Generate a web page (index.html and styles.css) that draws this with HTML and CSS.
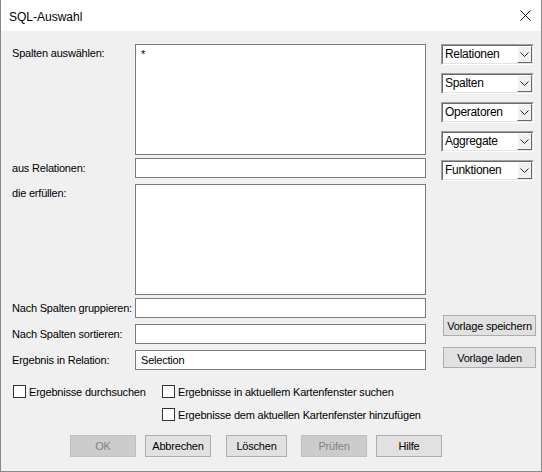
FILE: index.html
```html
<!DOCTYPE html>
<html lang="de">
<head>
<meta charset="utf-8">
<title>SQL-Auswahl</title>
<link rel="stylesheet" href="styles.css">
</head>
<body>
<div class="window">
  <div class="titlebar">
    <span class="title">SQL-Auswahl</span>
    <svg class="close" width="11" height="11" viewBox="0 0 11 11"><path d="M0.5 0.5L10.5 10.5M10.5 0.5L0.5 10.5" stroke="#111" stroke-width="1" fill="none"/></svg>
  </div>
  <div class="client">
    <div class="top">
      <div class="form">
        <div class="row tall"><span class="label">Spalten auswählen:</span><div class="field area">*</div></div>
        <div class="row gap3"><span class="label">aus Relationen:</span><div class="field line"></div></div>
        <div class="row tall gap6"><span class="label">die erfüllen:</span><div class="field area"></div></div>
        <div class="row gap3"><span class="label">Nach Spalten gruppieren:</span><div class="field line"></div></div>
        <div class="row gap6"><span class="label">Nach Spalten sortieren:</span><div class="field line"></div></div>
        <div class="row gap6"><span class="label">Ergebnis in Relation:</span><div class="field line">Selection</div></div>
      </div>
      <div class="side">
        <div class="combos">
          <div class="combo"><div class="combo-in"><span class="combo-text">Relationen</span><span class="dd"><svg width="9" height="5" viewBox="0 0 9 5"><path d="M0.5 0.5L4.5 4.5L8.5 0.5" stroke="#222" fill="none"/></svg></span></div></div>
          <div class="combo"><div class="combo-in"><span class="combo-text">Spalten</span><span class="dd"><svg width="9" height="5" viewBox="0 0 9 5"><path d="M0.5 0.5L4.5 4.5L8.5 0.5" stroke="#222" fill="none"/></svg></span></div></div>
          <div class="combo"><div class="combo-in"><span class="combo-text">Operatoren</span><span class="dd"><svg width="9" height="5" viewBox="0 0 9 5"><path d="M0.5 0.5L4.5 4.5L8.5 0.5" stroke="#222" fill="none"/></svg></span></div></div>
          <div class="combo"><div class="combo-in"><span class="combo-text">Aggregate</span><span class="dd"><svg width="9" height="5" viewBox="0 0 9 5"><path d="M0.5 0.5L4.5 4.5L8.5 0.5" stroke="#222" fill="none"/></svg></span></div></div>
          <div class="combo"><div class="combo-in"><span class="combo-text">Funktionen</span><span class="dd"><svg width="9" height="5" viewBox="0 0 9 5"><path d="M0.5 0.5L4.5 4.5L8.5 0.5" stroke="#222" fill="none"/></svg></span></div></div>
        </div>
        <div class="side-btns">
          <div class="btn side-btn">Vorlage speichern</div>
          <div class="btn side-btn">Vorlage laden</div>
        </div>
      </div>
    </div>
    <div class="checks">
      <div class="check"><span class="box"></span><span>Ergebnisse durchsuchen</span></div>
      <div class="check"><span class="box"></span><span>Ergebnisse in aktuellem Kartenfenster suchen</span></div>
      <div class="check col2"><span class="box"></span><span>Ergebnisse dem aktuellen Kartenfenster hinzufügen</span></div>
    </div>
    <div class="actions">
      <div class="btn disabled">OK</div>
      <div class="btn">Abbrechen</div>
      <div class="btn narrow">Löschen</div>
      <div class="btn disabled">Prüfen</div>
      <div class="btn">Hilfe</div>
    </div>
  </div>
</div>
</body>
</html>
```

FILE: styles.css
```css
* { box-sizing: border-box; }
html, body { margin: 0; padding: 0; }
body {
  font-family: "Liberation Sans", Arial, sans-serif;
  font-size: 11px;
  color: #000;
  background: #f0f0f0;
}
.window {
  width: 542px;
  height: 472px;
  border: 1px solid #888;
  border-top: none;
  background: #f0f0f0;
  display: flex;
  flex-direction: column;
  overflow: hidden;
}
.titlebar {
  height: 31px;
  background: #fff;
  display: flex;
  align-items: center;
  justify-content: space-between;
  padding: 2px 10px 0 8px;
  flex: none;
}
.title { font-size: 12px; }
.close { margin-top: -3px; }
.client {
  flex: 1;
  padding: 13px 0 0 0;
  letter-spacing: -0.2px;
}
.top { display: flex; }
.form {
  display: flex;
  flex-direction: column;
  padding-left: 11px;
}
.row { display: flex; height: 20px; align-items: center; }
.row.tall { height: 111px; align-items: flex-start; }
.row.gap3 { margin-top: 3px; }
.row.gap6 { margin-top: 6px; }
.label {
  width: 123px;
  flex: none;
  white-space: nowrap;
  line-height: 13px;
}
.row.tall .label { padding-top: 3px; }
.field {
  width: 291px;
  height: 100%;
  background: #fff;
  border: 1px solid #7a7a7a;
  line-height: 13px;
  padding: 2px 5px;
}
.field.line { padding: 2px 5px; line-height: 14px; }
.field.area { padding: 3px 5px; }
.side {
  margin-left: 15px;
  display: flex;
  flex-direction: column;
}
.combos { display: flex; flex-direction: column; gap: 8px; }
.combo {
  width: 93px;
  height: 21px;
  border: 1px solid;
  border-color: #a0a0a0 #ffffff #ffffff #a0a0a0;
  background: #fff;
}
.combo-in {
  height: 100%;
  display: flex;
  border: 1px solid;
  border-color: #696969 #e3e3e3 #e3e3e3 #696969;
}
.combo-text {
  flex: 1;
  padding-left: 2px;
  line-height: 17px;
  font-size: 12px;
  letter-spacing: -0.3px;
}
.dd {
  width: 15px;
  background: #f0f0f0;
  border: 1px solid;
  border-color: #ffffff #696969 #696969 #ffffff;
  display: flex;
  align-items: center;
  justify-content: center;
}
.side-btns {
  margin-top: 134px;
  margin-left: 2px;
  display: flex;
  flex-direction: column;
  gap: 11px;
}
.btn {
  height: 22px;
  width: 66px;
  background: #e1e1e1;
  border: 1px solid #adadad;
  display: flex;
  align-items: center;
  justify-content: center;
  white-space: nowrap;
}
.btn.side-btn { width: 93px; height: 21px; }
.btn.disabled { background: #cccccc; border-color: #bfbfbf; color: #838383; }
.btn.narrow { width: 61px; }
.checks {
  margin-top: 15px;
  padding-left: 12px;
  display: grid;
  grid-template-columns: 149px auto;
  row-gap: 10px;
}
.check { display: flex; align-items: center; height: 13px; white-space: nowrap; }
.check.col2 { grid-column: 2; }
.box {
  width: 13px;
  height: 13px;
  background: #fff;
  border: 1px solid #333;
  margin-right: 3px;
  flex: none;
}
.actions {
  margin-top: 14px;
  padding-left: 69px;
  display: flex;
}
.actions .btn + .btn { margin-left: 9px; }
.actions .btn.narrow { margin-left: 15px; }
.actions .btn.narrow + .btn { margin-left: 14px; }
```
